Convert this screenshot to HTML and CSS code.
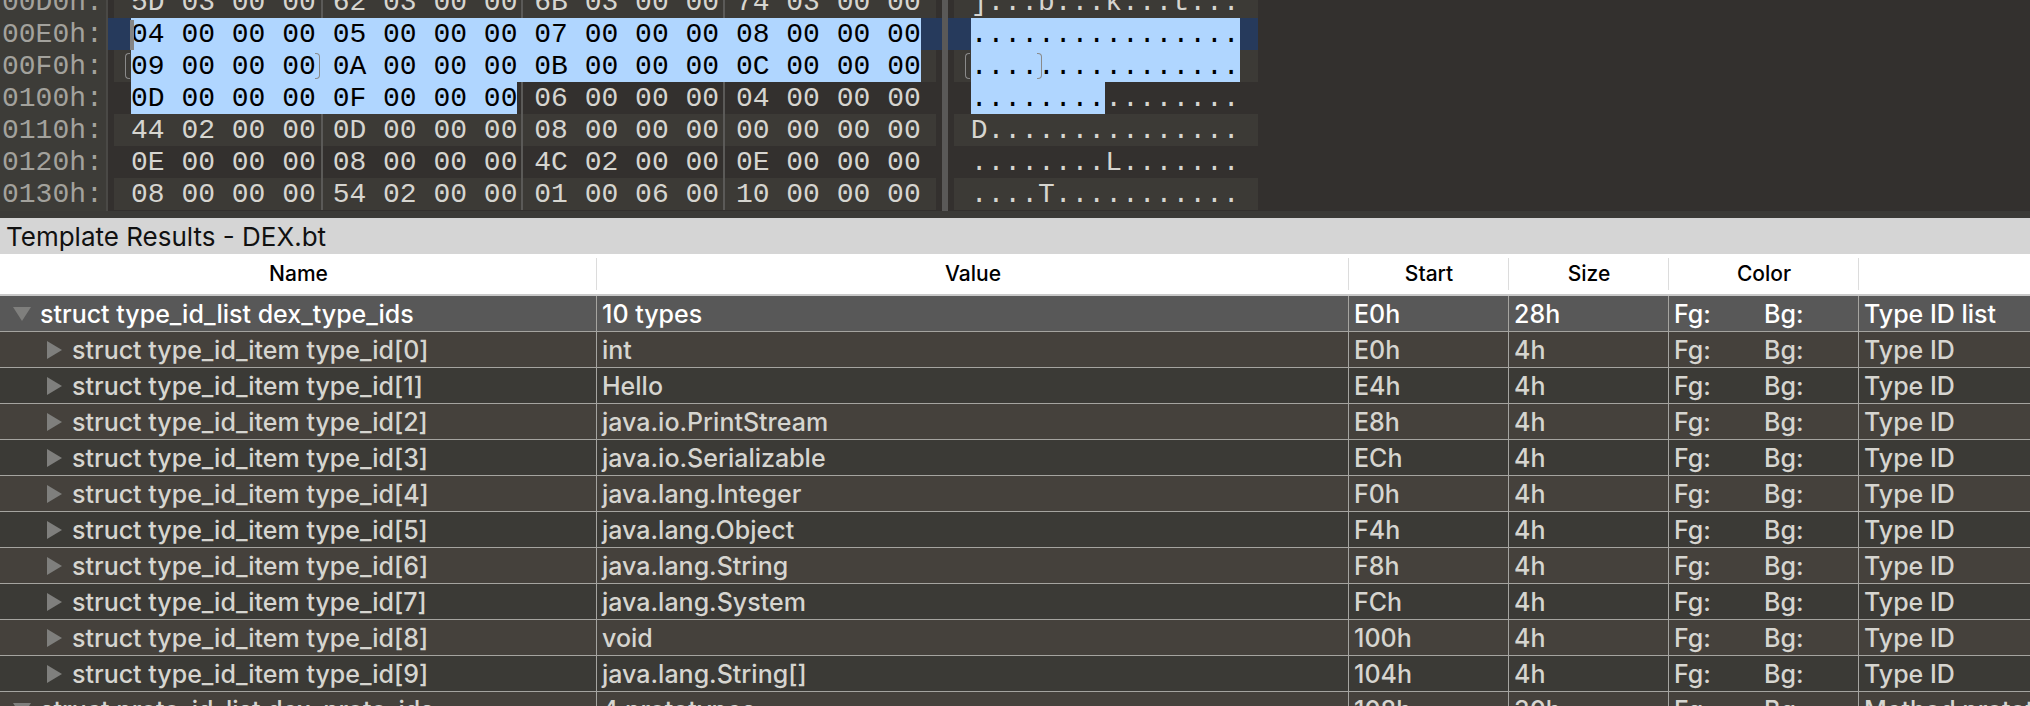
FILE: index.html
```
<!DOCTYPE html>
<html lang="en">
<head>
<meta charset="utf-8">
<title>Template Results - DEX.bt</title>
<link rel="stylesheet" href="styles.css">
</head>
<body>
<svg class="defs" aria-hidden="true">
  <symbol id="open" viewBox="0 0 18 18"><path d="M0 2h18L9 16z"/></symbol>
  <symbol id="closed" viewBox="0 0 18 18"><path d="M1 0l15 9-15 9z"/></symbol>
</svg>
<main class="app">
  <section class="hex" aria-label="Hex view">
    <div class="addresses">
      <div>00D0h:</div>
      <div>00E0h:</div>
      <div>00F0h:</div>
      <div>0100h:</div>
      <div>0110h:</div>
      <div>0120h:</div>
      <div>0130h:</div>
    </div>
    <div class="pane bytes">
      <div class="line">5D 03 00 00 62 03 00 00 6B 03 00 00 74 03 00 00</div>
      <div class="line current"><mark class="caret">04 00 00 00 05 00 00 00 07 00 00 00 08 00 00 00</mark></div>
      <div class="line"><mark><span class="word">09 00 00 00</span> 0A 00 00 00 0B 00 00 00 0C 00 00 00</mark></div>
      <div class="line"><mark>0D 00 00 00 0F 00 00 00</mark> 06 00 00 00 04 00 00 00</div>
      <div class="line">44 02 00 00 0D 00 00 00 08 00 00 00 00 00 00 00</div>
      <div class="line">0E 00 00 00 08 00 00 00 4C 02 00 00 0E 00 00 00</div>
      <div class="line">08 00 00 00 54 02 00 00 01 00 06 00 10 00 00 00</div>
    </div>
    <div class="divider"></div>
    <div class="pane chars">
      <div class="line">]...b...k...t...</div>
      <div class="line current"><mark>................</mark></div>
      <div class="line"><mark><span class="word">....</span>............</mark></div>
      <div class="line"><mark>........</mark>........</div>
      <div class="line">D...............</div>
      <div class="line">........L.......</div>
      <div class="line">....T...........</div>
    </div>
  </section>
  <section class="results">
    <h1 class="title">Template Results - DEX.bt</h1>
    <table class="tree">
      <colgroup>
        <col class="c-name"><col><col class="c-num"><col class="c-num"><col class="c-color"><col class="c-comment">
      </colgroup>
      <thead>
        <tr><th>Name</th><th>Value</th><th>Start</th><th>Size</th><th>Color</th><th></th></tr>
      </thead>
      <tbody>
        <tr class="selected"><td><div class="name"><button aria-label="Collapse"><svg><use href="#open"/></svg></button>struct type_id_list dex_type_ids</div></td><td>10 types</td><td>E0h</td><td>28h</td><td><div class="color"><span>Fg:</span><span>Bg:</span></div></td><td>Type ID list</td></tr>
        <tr><td><div class="name child"><button aria-label="Expand"><svg><use href="#closed"/></svg></button>struct type_id_item type_id[0]</div></td><td>int</td><td>E0h</td><td>4h</td><td><div class="color"><span>Fg:</span><span>Bg:</span></div></td><td>Type ID</td></tr>
        <tr><td><div class="name child"><button aria-label="Expand"><svg><use href="#closed"/></svg></button>struct type_id_item type_id[1]</div></td><td>Hello</td><td>E4h</td><td>4h</td><td><div class="color"><span>Fg:</span><span>Bg:</span></div></td><td>Type ID</td></tr>
        <tr><td><div class="name child"><button aria-label="Expand"><svg><use href="#closed"/></svg></button>struct type_id_item type_id[2]</div></td><td>java.io.PrintStream</td><td>E8h</td><td>4h</td><td><div class="color"><span>Fg:</span><span>Bg:</span></div></td><td>Type ID</td></tr>
        <tr><td><div class="name child"><button aria-label="Expand"><svg><use href="#closed"/></svg></button>struct type_id_item type_id[3]</div></td><td>java.io.Serializable</td><td>ECh</td><td>4h</td><td><div class="color"><span>Fg:</span><span>Bg:</span></div></td><td>Type ID</td></tr>
        <tr><td><div class="name child"><button aria-label="Expand"><svg><use href="#closed"/></svg></button>struct type_id_item type_id[4]</div></td><td>java.lang.Integer</td><td>F0h</td><td>4h</td><td><div class="color"><span>Fg:</span><span>Bg:</span></div></td><td>Type ID</td></tr>
        <tr><td><div class="name child"><button aria-label="Expand"><svg><use href="#closed"/></svg></button>struct type_id_item type_id[5]</div></td><td>java.lang.Object</td><td>F4h</td><td>4h</td><td><div class="color"><span>Fg:</span><span>Bg:</span></div></td><td>Type ID</td></tr>
        <tr><td><div class="name child"><button aria-label="Expand"><svg><use href="#closed"/></svg></button>struct type_id_item type_id[6]</div></td><td>java.lang.String</td><td>F8h</td><td>4h</td><td><div class="color"><span>Fg:</span><span>Bg:</span></div></td><td>Type ID</td></tr>
        <tr><td><div class="name child"><button aria-label="Expand"><svg><use href="#closed"/></svg></button>struct type_id_item type_id[7]</div></td><td>java.lang.System</td><td>FCh</td><td>4h</td><td><div class="color"><span>Fg:</span><span>Bg:</span></div></td><td>Type ID</td></tr>
        <tr><td><div class="name child"><button aria-label="Expand"><svg><use href="#closed"/></svg></button>struct type_id_item type_id[8]</div></td><td>void</td><td>100h</td><td>4h</td><td><div class="color"><span>Fg:</span><span>Bg:</span></div></td><td>Type ID</td></tr>
        <tr><td><div class="name child"><button aria-label="Expand"><svg><use href="#closed"/></svg></button>struct type_id_item type_id[9]</div></td><td>java.lang.String[]</td><td>104h</td><td>4h</td><td><div class="color"><span>Fg:</span><span>Bg:</span></div></td><td>Type ID</td></tr>
        <tr><td><div class="name"><button aria-label="Collapse"><svg><use href="#open"/></svg></button>struct proto_id_list dex_proto_ids</div></td><td>4 prototypes</td><td>108h</td><td>30h</td><td><div class="color"><span>Fg:</span><span>Bg:</span></div></td><td>Method prototype ID list</td></tr>
      </tbody>
    </table>
  </section>
</main>
</body>
</html>
```
FILE: styles.css
```
* { box-sizing: border-box; }

body {
  margin: 0;
  background: #3b3a36;
  font-family: Inter, "Liberation Sans", sans-serif;
}

.defs { display: none; }

.app {
  height: 100vh;
  overflow: hidden;
}

/* Hex view */
.hex {
  display: flex;
  overflow: hidden;
  background: #33302e;
  border-bottom: 7px solid #3b3a37;
  color: #d6d5d0;
  font: 28px/34px "Courier New", "Liberation Mono", monospace;
}

.addresses,
.pane { margin-top: -14px; }

.addresses {
  width: 108px;
  padding-left: 2px;
  background: #3d3c38;
  border-right: 2px solid #4a4946;
  color: #a3a29d;
}

.addresses div { height: 32px; }

.line {
  height: 32px;
  padding: 0 15px 0 17px;
  white-space: pre;
}

.pane { padding: 0 6px 1px; }
.chars { padding-right: 0; }
.chars .line { padding-right: 18px; }

.line:nth-child(odd) { background-color: #3c3a36; }

.bytes .line {
  background-image:
    linear-gradient(#5b5a58, #5b5a58),
    linear-gradient(#5b5a58, #5b5a58),
    linear-gradient(#5b5a58, #5b5a58);
  background-position: 207px 0, 407px 0, 609px 0;
  background-size: 2px 100%;
  background-repeat: no-repeat;
}

.pane .current {
  margin: 0 -6px;
  padding-left: 23px;
  background: #263a5c;
}

.chars .current { margin-right: 0; }

.divider {
  width: 6px;
  background: #5a5958;
}

mark {
  position: relative;
  display: inline-block;
  height: 32px;
  background: #b0d6ff;
  color: #000;
}

.caret::before {
  content: "";
  position: absolute;
  left: -1px;
  top: 2px;
  width: 4px;
  height: 30px;
  background: #858585;
}

.word { position: relative; }

.word::before,
.word::after {
  content: "";
  position: absolute;
  top: 2px;
  width: 4px;
  height: 24px;
  border: 1px solid #8a8a8a;
}

.word::before {
  left: -6px;
  border-right: 0;
  border-radius: 4px 0 0 4px;
}

.word::after {
  right: -4px;
  border-left: 0;
  border-radius: 0 4px 4px 0;
}

/* Template results */
.title {
  margin: 0;
  padding: 1px 0 0 6px;
  background: #d5d5d5;
  color: #111;
  font-size: 26px;
  font-weight: 400;
  line-height: 35px;
}

.tree {
  width: 100%;
  table-layout: fixed;
  border-collapse: separate;
  border-spacing: 0;
  color: #d6d5d0;
  font-size: 25px;
  font-weight: 500;
}

.c-name { width: 597px; }
.c-num { width: 160px; }
.c-color { width: 190px; }
.c-comment { width: 171px; }

.tree th {
  height: 42px;
  padding: 0 0 1px;
  background: linear-gradient(#dcdcdc, #dcdcdc) right 4px / 1px 32px no-repeat #fff;
  border-bottom: 2px solid #c8c8c8;
  color: #000;
  font-size: 21px;
  font-weight: 500;
}

.tree th:last-child { background: #fff; }

.tree td {
  height: 36px;
  padding: 1px 0 0 5px;
  border-right: 1px solid #a5a4a0;
  border-bottom: 1px solid #a5a4a0;
  line-height: 34px;
  white-space: nowrap;
  overflow: hidden;
}

.tree td:first-child { padding-left: 13px; }
.tree td:last-child { border-right: 0; }

.tree tbody tr:nth-child(odd) { background: #3b3a36; }
.tree tbody tr:nth-child(even) { background: #45413c; }

.tree tbody tr.selected:first-child {
  background: #585858;
  color: #fff;
}

.name {
  display: flex;
  align-items: center;
  gap: 9px;
}

.child { padding-left: 33px; gap: 8px; }

.name button {
  display: flex;
  padding: 0;
  border: 0;
  background: none;
  color: #7f7f7d;
}

.name svg {
  width: 18px;
  height: 18px;
  fill: currentColor;
}

.color {
  display: grid;
  grid-template-columns: 90px 1fr;
}
```
